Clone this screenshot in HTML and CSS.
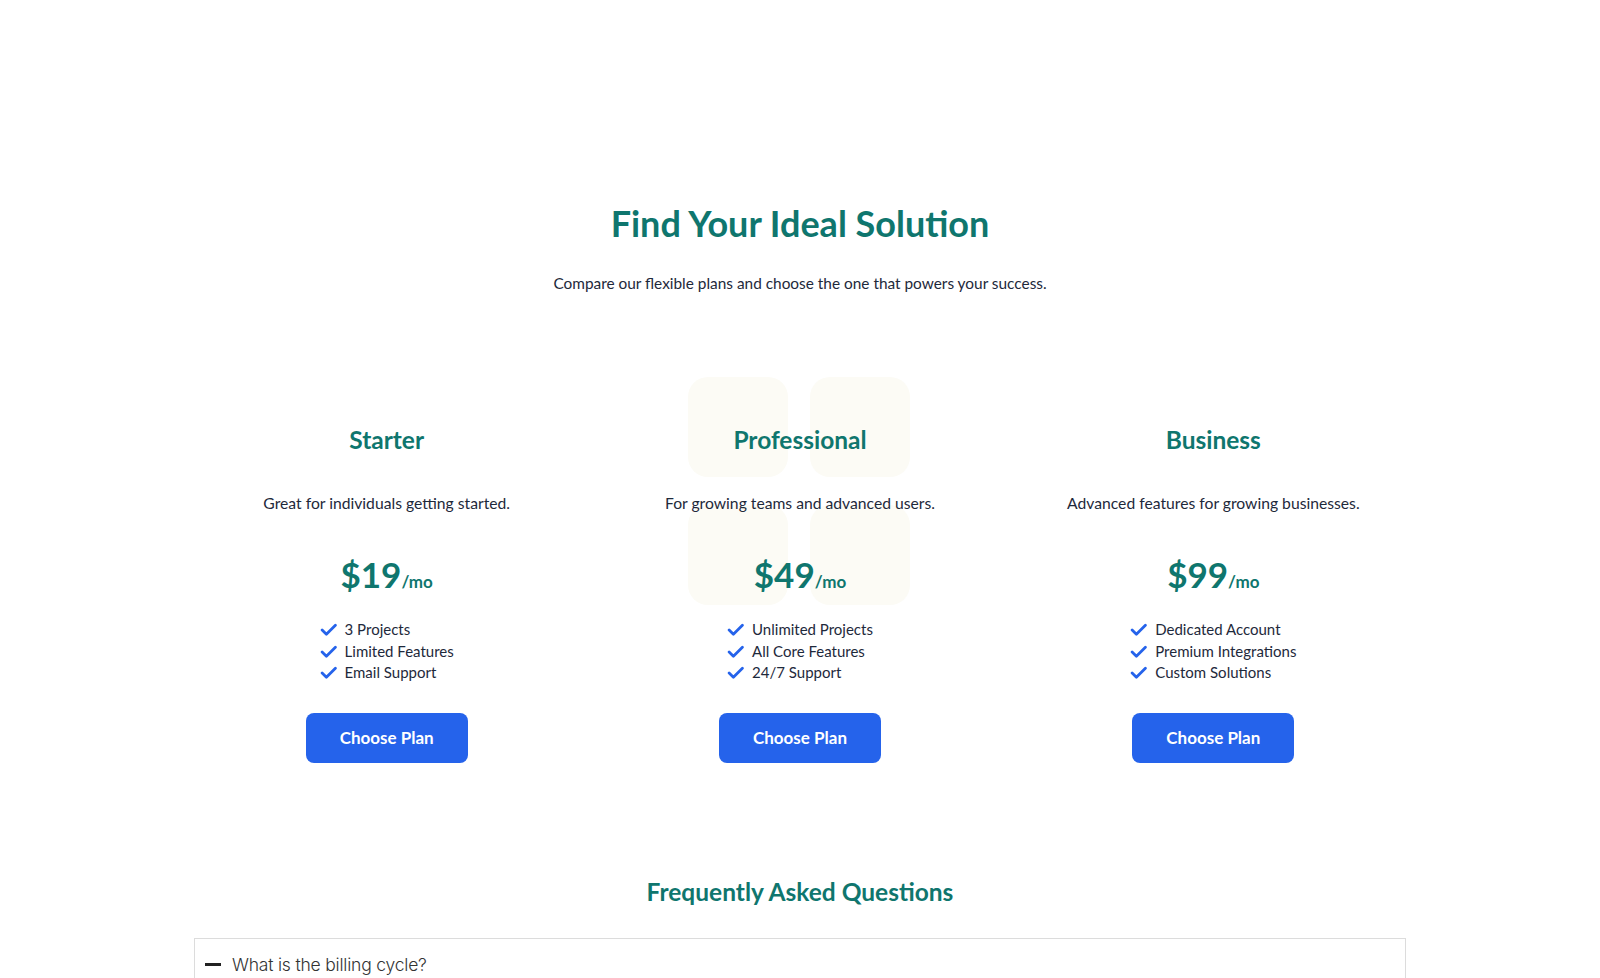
FILE: index.html
```html
<!DOCTYPE html>
<html lang="en">
<head>
<meta charset="utf-8">
<title>Find Your Ideal Solution</title>
<link rel="stylesheet" href="styles.css">
</head>
<body>
<main class="page">
  <header class="intro">
    <h1 class="intro-title">Find Your Ideal Solution</h1>
    <p class="intro-text">Compare our flexible plans and choose the one that powers your success.</p>
  </header>

  <section class="plans">
    <div class="deco" aria-hidden="true">
      <span class="deco-tile"></span><span class="deco-tile"></span>
      <span class="deco-tile"></span><span class="deco-tile"></span>
    </div>

    <article class="plan">
      <h2 class="plan-name">Starter</h2>
      <p class="plan-desc">Great for individuals getting started.</p>
      <p class="plan-price">$19<span class="plan-per">/mo</span></p>
      <ul class="plan-features">
        <li><svg class="check" viewBox="0 0 16 16"><path d="M2 8.5l4 4L14.5 4" /></svg>3 Projects</li>
        <li><svg class="check" viewBox="0 0 16 16"><path d="M2 8.5l4 4L14.5 4" /></svg>Limited Features</li>
        <li><svg class="check" viewBox="0 0 16 16"><path d="M2 8.5l4 4L14.5 4" /></svg>Email Support</li>
      </ul>
      <button class="plan-btn">Choose Plan</button>
    </article>

    <article class="plan">
      <h2 class="plan-name">Professional</h2>
      <p class="plan-desc">For growing teams and advanced users.</p>
      <p class="plan-price">$49<span class="plan-per">/mo</span></p>
      <ul class="plan-features">
        <li><svg class="check" viewBox="0 0 16 16"><path d="M2 8.5l4 4L14.5 4" /></svg>Unlimited Projects</li>
        <li><svg class="check" viewBox="0 0 16 16"><path d="M2 8.5l4 4L14.5 4" /></svg>All Core Features</li>
        <li><svg class="check" viewBox="0 0 16 16"><path d="M2 8.5l4 4L14.5 4" /></svg>24/7 Support</li>
      </ul>
      <button class="plan-btn">Choose Plan</button>
    </article>

    <article class="plan">
      <h2 class="plan-name">Business</h2>
      <p class="plan-desc">Advanced features for growing businesses.</p>
      <p class="plan-price">$99<span class="plan-per">/mo</span></p>
      <ul class="plan-features">
        <li><svg class="check" viewBox="0 0 16 16"><path d="M2 8.5l4 4L14.5 4" /></svg>Dedicated Account</li>
        <li><svg class="check" viewBox="0 0 16 16"><path d="M2 8.5l4 4L14.5 4" /></svg>Premium Integrations</li>
        <li><svg class="check" viewBox="0 0 16 16"><path d="M2 8.5l4 4L14.5 4" /></svg>Custom Solutions</li>
      </ul>
      <button class="plan-btn">Choose Plan</button>
    </article>
  </section>

  <section class="faq">
    <h2 class="faq-title">Frequently Asked Questions</h2>
    <div class="faq-item">
      <div class="faq-q"><span class="faq-minus"></span>What is the billing cycle?</div>
    </div>
  </section>
</main>
</body>
</html>
```

FILE: styles.css
```css
* { box-sizing: border-box; }

html, body {
  margin: 0;
  padding: 0;
  background: #ffffff;
}

body {
  font-family: "Lato", "Inter", sans-serif;
  color: #1e293b;
  overflow: hidden;
  height: 978px;
}

.page {
  padding-top: 201px;
}

.intro {
  text-align: center;
}

.intro-title {
  margin: 0;
  font-size: 36px;
  line-height: 44px;
  font-weight: 700;
  color: #0f766e;
}

.intro-text {
  margin: 26px 0 0;
  font-size: 15.4px;
  line-height: 24px;
  color: #1e293b;
}

.plans {
  position: relative;
  width: 1240px;
  margin: 130px auto 0;
  display: grid;
  grid-template-columns: repeat(3, 1fr);
}

.deco {
  position: absolute;
  left: 508px;
  top: -48px;
  display: grid;
  grid-template-columns: 100px 100px;
  grid-auto-rows: 100px;
  gap: 28px 22px;
  z-index: 0;
}

.deco-tile {
  display: block;
  background: #fcfbf5;
  border-radius: 20px;
}

.plan {
  position: relative;
  z-index: 1;
  display: flex;
  flex-direction: column;
  align-items: center;
  text-align: center;
}

.plan-name {
  margin: 0;
  font-size: 24.5px;
  line-height: 29px;
  font-weight: 700;
  color: #0f766e;
}

.plan-desc {
  margin: 37px 0 0;
  font-size: 15.7px;
  line-height: 24px;
}

.plan-price {
  margin: 38px 0 0;
  font-size: 35px;
  line-height: 43px;
  font-weight: 700;
  color: #0f766e;
}

.plan-per {
  font-size: 17px;
  font-weight: 700;
}

.plan-features {
  list-style: none;
  margin: 16px 0 0;
  padding: 0;
  text-align: left;
}

.plan-features li {
  display: flex;
  align-items: center;
  font-size: 15px;
  line-height: 21.5px;
}

.check {
  width: 17px;
  height: 17px;
  margin-right: 8px;
  fill: none;
  stroke: #2563eb;
  stroke-width: 2.6;
  stroke-linecap: round;
  stroke-linejoin: round;
}

.plan-btn {
  margin-top: 29px;
  width: 162px;
  height: 50px;
  border: 0;
  border-radius: 8px;
  background: #2563eb;
  color: #ffffff;
  font-family: inherit;
  font-size: 17px;
  font-weight: 700;
  cursor: pointer;
}

.faq {
  width: 1212px;
  margin: 114px auto 0;
}

.faq-title {
  margin: 0;
  text-align: center;
  font-size: 24.5px;
  line-height: 29px;
  font-weight: 700;
  color: #0f766e;
}

.faq-item {
  margin-top: 32px;
  border: 1px solid #dcdcdc;
  border-bottom: 0;
  height: 60px;
}

.faq-q {
  display: flex;
  align-items: center;
  padding: 14px 10px;
  font-family: "Inter", sans-serif;
  font-weight: 300;
  font-size: 17.5px;
  line-height: 24px;
  color: #333333;
  letter-spacing: -0.2px;
}

.faq-minus {
  display: inline-block;
  width: 16px;
  height: 3px;
  background: #222222;
  margin-right: 11px;
}
```
